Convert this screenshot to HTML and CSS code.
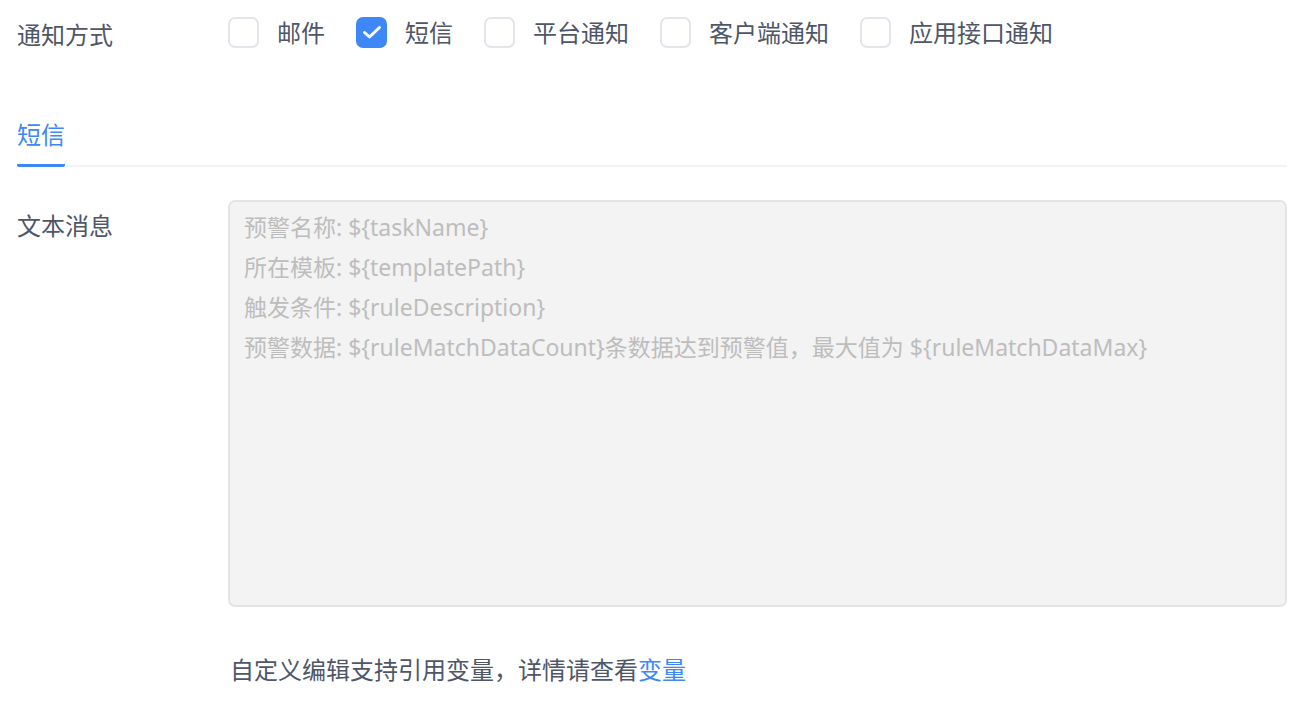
FILE: index.html
```html
<!DOCTYPE html>
<html lang="zh-CN">
<head>
<meta charset="utf-8">
<title>通知方式</title>
<link rel="stylesheet" href="styles.css">
</head>
<body>
<div class="page">
  <div class="row row-methods">
    <div class="label">通知方式</div>
    <div class="checks">
      <label class="check"><span class="box"></span><span class="check-text">邮件</span></label>
      <label class="check"><span class="box checked"><svg viewBox="0 0 22 22" width="22" height="22"><path d="M3.5 11.5l5 4.5 10-9.5" fill="none" stroke="#fff" stroke-width="3" stroke-linecap="round" stroke-linejoin="round"/></svg></span><span class="check-text">短信</span></label>
      <label class="check"><span class="box"></span><span class="check-text">平台通知</span></label>
      <label class="check"><span class="box"></span><span class="check-text">客户端通知</span></label>
      <label class="check"><span class="box"></span><span class="check-text">应用接口通知</span></label>
    </div>
  </div>

  <div class="tabs">
    <div class="tab active">短信</div>
  </div>

  <div class="row row-message">
    <div class="label label-top">文本消息</div>
    <div class="field">
      <textarea class="textarea" placeholder="预警名称: ${taskName}&#10;所在模板: ${templatePath}&#10;触发条件: ${ruleDescription}&#10;预警数据: ${ruleMatchDataCount}条数据达到预警值，最大值为 ${ruleMatchDataMax}"></textarea>
      <div class="hint">自定义编辑支持引用变量，详情请查看<a class="link">变量</a></div>
    </div>
  </div>
</div>
</body>
</html>
```

FILE: styles.css
```css
* { box-sizing: border-box; }
html, body { margin: 0; padding: 0; background: #fff; }
body {
  font-family: "Noto Sans", "Noto Sans CJK SC", sans-serif;
  color: #4e5667;
}
.page {
  width: 1309px;
  padding: 0 22px 0 17px;
}
.row { display: flex; }
.label {
  width: 211px;
  flex: none;
  font-size: 24px;
  color: #4e5667;
}
.row-methods {
  height: 66px;
  align-items: center;
}
.checks {
  display: flex;
  align-items: center;
  gap: 31px;
}
.check {
  display: flex;
  align-items: center;
  gap: 18px;
  font-size: 24px;
  line-height: 32px;
}
.box {
  width: 31px;
  height: 31px;
  border: 2px solid #e3e5ea;
  border-radius: 7px;
  display: flex;
  align-items: center;
  justify-content: center;
  margin-top: -2px;
}
.box.checked {
  background: #3e87f6;
  border-color: #3e87f6;
}
.box svg { width: 22px; height: 22px; }
.tabs {
  margin-top: 51px;
  display: flex;
  border-bottom: 2px solid #f2f3f5;
}
.tab {
  font-size: 24px;
  line-height: 36px;
  padding-bottom: 11px;
  margin-bottom: -2px;
  color: #3e87f6;
  border-bottom: 3px solid #3e87f6;
  border-radius: 0 0 2px 2px;
}
.row-message {
  margin-top: 33px;
}
.label-top {
  line-height: 40px;
  padding-top: 6px;
}
.field {
  flex: 1;
  display: flex;
  flex-direction: column;
}
.textarea {
  display: block;
  width: 100%;
  height: 407px;
  margin: 0;
  resize: none;
  background: #f3f3f3;
  border: 2px solid #e4e4e4;
  border-radius: 7px;
  padding: 5px 14px;
  font-family: "Noto Sans", "Noto Sans CJK SC", sans-serif;
  font-size: 23px;
  line-height: 40px;
  color: #666;
  outline: none;
}
.textarea::placeholder {
  color: #bdbdbd;
}
.hint {
  margin-top: 45px;
  padding-left: 2px;
  font-size: 24px;
  line-height: 36px;
  color: #4e5667;
}
.link {
  color: #3e87f6;
  cursor: pointer;
}
```
